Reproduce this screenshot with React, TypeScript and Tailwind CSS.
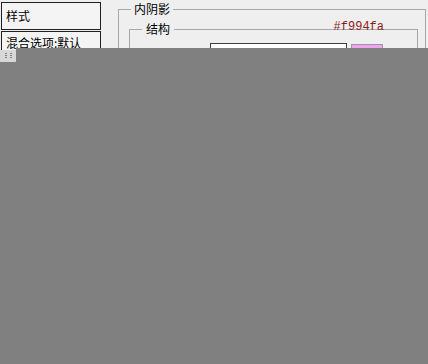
import React from "react";

const cjk = { fontFamily: '"SimSun", "Noto Sans CJK SC", sans-serif' };
const mono = { fontFamily: '"Liberation Mono", monospace' };

function StyleList() {
  return (
    <div className="w-[100px] shrink-0 ml-[1px] pt-[2px] flex flex-col gap-[1px] text-[12px] text-black" style={cjk}>
      <div className="h-[28px] border border-[#202020] bg-[#f4f4f4] pl-[4px] pt-[6px] leading-[14px]">样式</div>
      <div className="h-[28px] border border-[#202020] bg-[#f4f4f4] pl-[4px] pt-[4px] leading-[14px] whitespace-nowrap">
        混合选项:默认
      </div>
    </div>
  );
}

function InnerShadow() {
  return (
    <fieldset className="relative ml-[17px] mr-[2px] mt-[2px] flex-1 border border-[#a8a8a8] pl-[10px] pr-[7px] pb-2 min-w-0">
      <legend className="ml-[2px] px-[3px] leading-[14px] text-[12px] text-black" style={cjk}>
        内阴影
      </legend>
      <span className="absolute right-[41px] top-[5px] text-[12px] leading-[12px] text-[#8b1c1c]" style={mono}>
        #f994fa
      </span>
      <fieldset className="mt-[6px] border border-[#a8a8a8] pl-[12px] pr-2 pb-2 min-w-0">
        <legend className="px-[4px] leading-[14px] text-[12px] text-black" style={cjk}>
          结构
        </legend>
        <div className="flex items-start pt-[7px]">
          <div className="ml-[68px] w-[137px] h-[24px] border border-[#404040] bg-white" />
          <div className="ml-[4px] mt-[1px] w-[32px] h-[20px] border border-[#9a9a9a] bg-[#f2a4f2]" />
        </div>
      </fieldset>
    </fieldset>
  );
}

export default function App() {
  return (
    <div className="relative w-[428px] h-[364px] overflow-hidden bg-[#efefef]">
      <div className="flex h-[80px]">
        <StyleList />
        <InnerShadow />
      </div>

      {/* grey cover over the lower part of the dialog */}
      <div className="absolute left-[16px] right-0 top-[48px] bottom-0 bg-[#808080]" />
      <div className="absolute left-0 top-[50px] w-[16px] h-[12px] bg-[#d8d8d8] flex items-center justify-center gap-[3px]">
        <span className="w-[2px] h-[6px] bg-[repeating-linear-gradient(#808080_0_1px,transparent_1px_2px)]" />
        <span className="w-[2px] h-[6px] bg-[repeating-linear-gradient(#808080_0_1px,transparent_1px_2px)]" />
      </div>
      <div className="absolute left-0 top-[62px] w-[16px] bottom-0 bg-[#808080]" />
    </div>
  );
}
